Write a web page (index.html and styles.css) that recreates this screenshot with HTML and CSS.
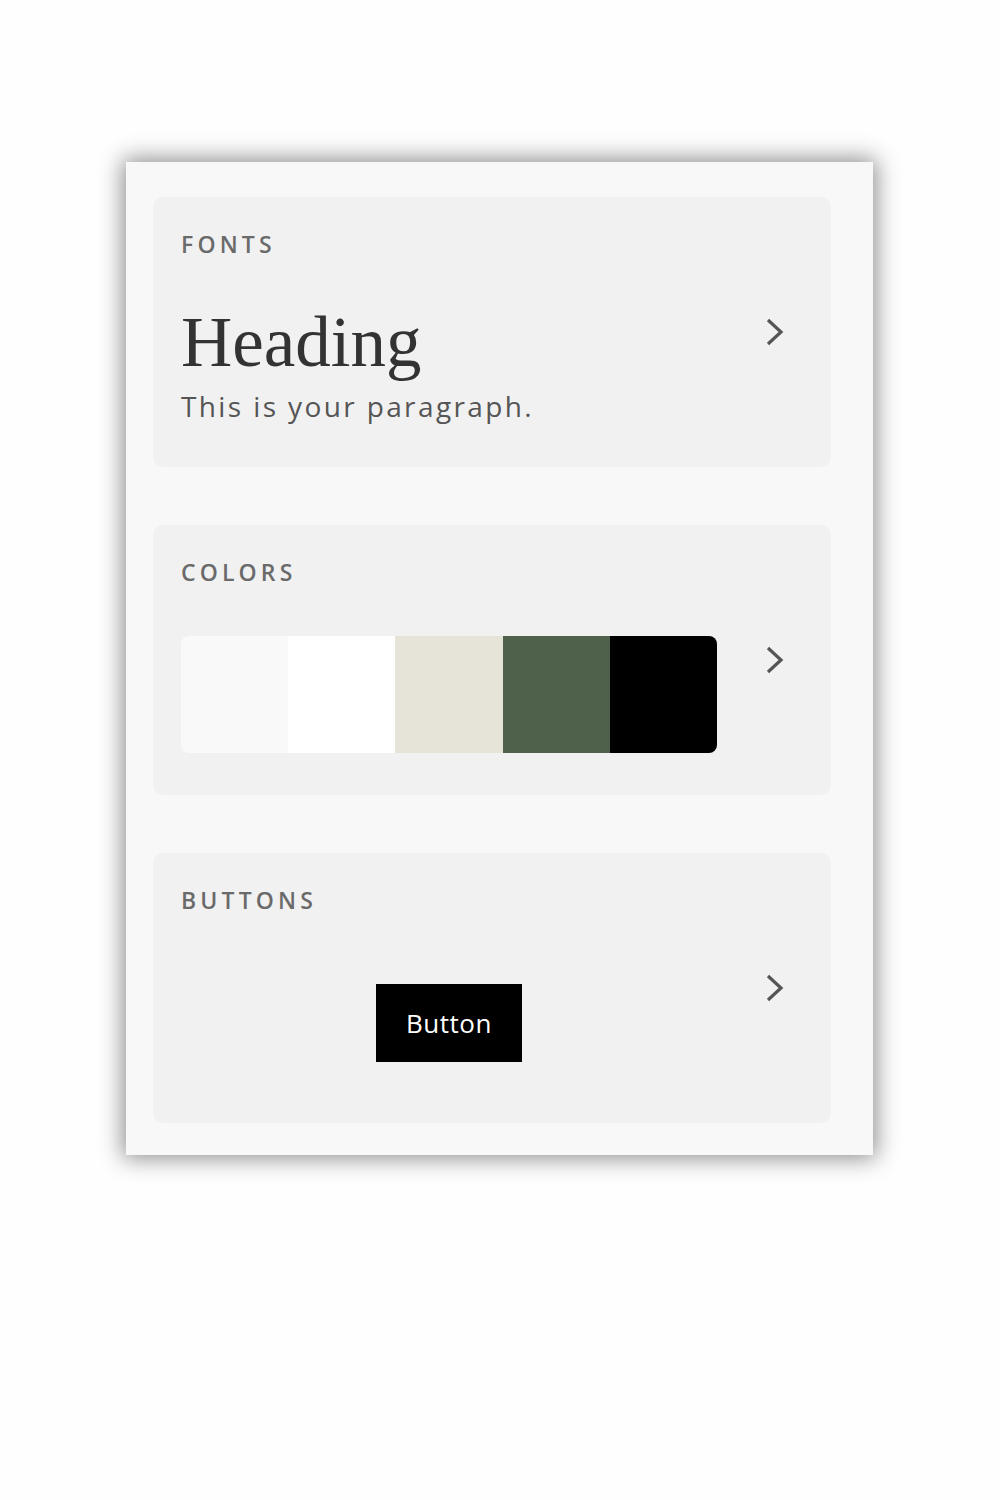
FILE: index.html
```html
<!DOCTYPE html>
<html lang="en">
  <head>
    <meta charset="UTF-8" />
    <meta name="viewport" content="width=device-width, initial-scale=1" />
    <title>Site Styles</title>
    <link rel="stylesheet" href="styles.css">
  </head>
  <body>
    <div class="page">
      <aside class="styles-panel">
        <section class="style-card">
          <div class="card-body">
            <h2 class="card-label">Fonts</h2>
            <p class="font-heading">Heading</p>
            <p class="font-paragraph">This is your paragraph.</p>
          </div>
          <svg class="chevron" viewBox="0 0 22 30" aria-hidden="true">
            <polyline points="4,3 17,15 4,27" />
          </svg>
        </section>

        <section class="style-card">
          <div class="card-body">
            <h2 class="card-label">Colors</h2>
            <div class="palette">
              <span class="swatch" style="background: #f9f9f9"></span>
              <span class="swatch" style="background: #ffffff"></span>
              <span class="swatch" style="background: #e6e3d8"></span>
              <span class="swatch" style="background: #4f614b"></span>
              <span class="swatch" style="background: #000000"></span>
            </div>
          </div>
          <svg class="chevron" viewBox="0 0 22 30" aria-hidden="true">
            <polyline points="4,3 17,15 4,27" />
          </svg>
        </section>

        <section class="style-card">
          <div class="card-body">
            <h2 class="card-label">Buttons</h2>
            <button class="sample-button" type="button">Button</button>
          </div>
          <svg class="chevron" viewBox="0 0 22 30" aria-hidden="true">
            <polyline points="4,3 17,15 4,27" />
          </svg>
        </section>
      </aside>
    </div>
  </body>
</html>
```

FILE: styles.css
```css
* {
  margin: 0;
  padding: 0;
  box-sizing: border-box;
  font-family: "Open Sans", "Liberation Sans", Arial, sans-serif;
}
body {
  background: #fefefe;
  color: #333;
  min-height: 100vh;
}

.page {
  padding: 162px 0 0 126px;
}

/* Panel */
.styles-panel {
  width: 747px;
  height: 993px;
  background: #f8f8f8;
  box-shadow: 0 0 22px 3px rgba(0, 0, 0, 0.45);
  padding: 35px 42px 32px 27px;
  display: flex;
  flex-direction: column;
  gap: 58px;
}

/* Cards */
.style-card {
  height: 270px;
  background: #f1f1f1;
  border-radius: 10px;
  padding: 34px 45px 0 28px;
  display: flex;
  justify-content: space-between;
}
.card-body {
  width: 536px;
  display: flex;
  flex-direction: column;
}
.card-label {
  font-size: 23px;
  line-height: 26px;
  font-weight: 600;
  letter-spacing: 0.18em;
  text-transform: uppercase;
  color: #6a6a6a;
}

.chevron {
  width: 22px;
  height: 30px;
  align-self: center;
  margin-top: -34px;
  fill: none;
  stroke: #555;
  stroke-width: 3.2;
}

/* Fonts */
.font-heading {
  font-family: "Liberation Serif", "Times New Roman", serif;
  font-size: 71px;
  line-height: 70px;
  color: #333;
  margin-top: 50px;
}
.font-paragraph {
  font-size: 28px;
  line-height: 34px;
  letter-spacing: 0.085em;
  color: #555;
  margin-top: 12px;
}

/* Colors */
.palette {
  margin-top: 51px;
  height: 117px;
  display: flex;
  border-radius: 8px;
  overflow: hidden;
}
.swatch {
  flex: 1;
}

/* Buttons */
.sample-button {
  margin-top: 71px;
  align-self: center;
  width: 146px;
  height: 78px;
  background: #000;
  color: #fff;
  border: none;
  font-size: 26px;
  letter-spacing: 0.02em;
  cursor: pointer;
}
```
